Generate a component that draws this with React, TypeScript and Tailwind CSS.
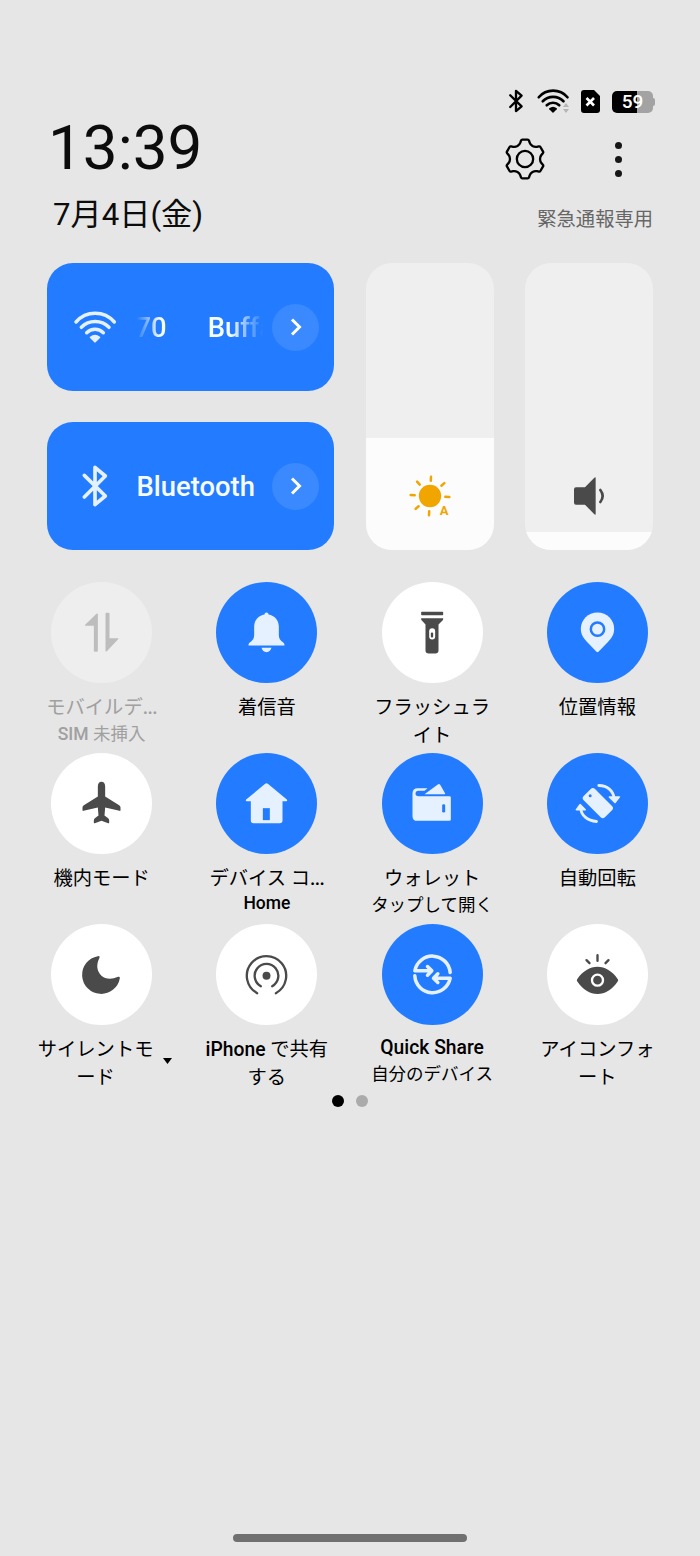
import React from 'react';
import clsx from 'clsx';

type TileState = 'on' | 'off' | 'disabled';

interface Tile {
  id: string;
  icon: React.ReactNode;
  state: TileState;
  lines: string[];
  subtitle?: string;
  hasMenu?: boolean;
}

interface IconProps {
  children: React.ReactNode;
  className?: string;
}

function Icon({ children, className = 'w-12 h-12' }: IconProps) {
  return (
    <svg viewBox="0 0 144 144" className={`shrink-0 ${className}`} fill="currentColor">
      {children}
    </svg>
  );
}

// Odd size so that it centers on whole pixels in the 101px circle
function TileIcon({ children }: IconProps) {
  return (
    <svg viewBox="-1.5 -1.5 147 147" className="shrink-0 w-[49px] h-[49px]" fill="currentColor">
      {children}
    </svg>
  );
}

function Strokes({ children, width }: { children: React.ReactNode; width: number }) {
  return (
    <g fill="none" stroke="currentColor" strokeWidth={width} strokeLinecap="round" strokeLinejoin="round">
      {children}
    </g>
  );
}

function WifiIcon({ className }: { className?: string }) {
  return (
    <Icon className={className}>
      <Strokes width={10.5}>
        <path d="M15 57A76 76 0 0 1 130 57" />
        <path d="M31 73A58 58 0 0 1 114 73" />
        <path d="M47 89A36 36 0 0 1 97 89" />
      </Strokes>
      <path d="M57 105q-2-2 0-4 15-12 30 0 2 2 0 4L74 118q-2 2-4 0z" />
    </Icon>
  );
}

function BluetoothIcon({ className, width = 11 }: { className?: string; width?: number }) {
  return (
    <Icon className={className}>
      <Strokes width={width}>
        <path d="M40 40L103 102 72 128V16L103 42 40 105" />
      </Strokes>
    </Icon>
  );
}

// Six teeth, one every 60 degrees
function gearPath() {
  const parts: string[] = [];
  for (let i = 0; i < 6; i++) {
    const a = (i * Math.PI) / 3;
    const p = (x: number, y: number) =>
      `${(72 + x * Math.cos(a) - y * Math.sin(a)).toFixed(1)} ${(72 + x * Math.sin(a) + y * Math.cos(a)).toFixed(1)}`;
    parts.push(
      `${i === 0 ? 'M' : 'L'}${p(-14, -49)}L${p(-12, -55)}Q${p(-11, -58)} ${p(-8, -58)}L${p(8, -58)}Q${p(11, -58)} ${p(12, -55)}L${p(14, -49)}Q${p(16, -43)} ${p(22.5, -39)}Q${p(29, -35.5)} ${p(35.4, -36.6)}`
    );
  }
  return parts.join('') + 'Z';
}

function GearIcon() {
  return (
    <Icon>
      <Strokes width={7}>
        <path d={gearPath()} />
        <circle cx="72" cy="72" r="24.500" />
      </Strokes>
    </Icon>
  );
}

const tiles: Tile[] = [
  {
    id: 'mobile-data',
    state: 'disabled',
    lines: ['モバイルデ...'],
    subtitle: 'SIM 未挿入',
    icon: (
      <TileIcon>
        <path d="M57 16q4-3 4 1V127q0 3-3 3H53q-4 0-4-3V52H24q-4 0-1-3zM87 13h5q4 0 4 3V89h25q4 0 1 3L88 128q-4 3-4-1V16q0-3 3-3z" />
      </TileIcon>
    ),
  },
  {
    id: 'ringtone',
    state: 'on',
    lines: ['着信音'],
    icon: (
      <TileIcon>
        <path d="M72 12c4 0 6 3 6 6 18 3 31 17 31 36v26c0 10 5 16 13 22 3 2 4 5 4 9H18c0-4 1-7 4-9 8-6 13-12 13-22V54c0-19 13-33 31-36 0-3 2-6 6-6zM57 118h30c-2 8-8 13-15 13s-13-5-15-13z" />
      </TileIcon>
    ),
  },
  {
    id: 'flashlight',
    state: 'off',
    lines: ['フラッシュラ', 'イト'],
    icon: (
      <TileIcon>
        <rect x="38" y="10" width="66" height="10" rx="2" />
        <path d="M38 29h66v3q0 2-2 4L90 48v78q0 9-10 9H61q-10 0-10-9V48L40 36q-2-2-2-4z" />
        <rect x="62" y="59" width="18" height="34" rx="9" className="fill-white" />
        <rect x="67" y="72" width="7" height="15" rx="3" />
      </TileIcon>
    ),
  },
  {
    id: 'location',
    state: 'on',
    lines: ['位置情報'],
    icon: (
      <TileIcon>
        <path d="M72 12C100 12 122 34 122 61c0 17-8 28-18 39L75 130q-3 2-6 0L40 100C30 89 22 78 22 61 22 34 44 12 72 12z" />
        <circle cx="72" cy="62" r="20" fill="none" strokeWidth="7.500" className="stroke-[#237cff]" />
      </TileIcon>
    ),
  },
  {
    id: 'airplane',
    state: 'off',
    lines: ['機内モード'],
    icon: (
      <TileIcon>
        <path d="M72 7c-7 0-11 6-11 14v30L19 77q-4 3-4 7v8q0 3 3 2l43-10 2 24-11 8q-3 3-3 6v7q0 3 3 2l20-7 20 7q3 1 3-2v-7q0-3-3-6l-11-8 2-24 43 10q3 1 3-2v-8q0-4-4-7L83 51V21c0-8-4-14-11-14z" />
      </TileIcon>
    ),
  },
  {
    id: 'device-control',
    state: 'on',
    lines: ['デバイス コ...'],
    subtitle: 'Home',
    icon: (
      <TileIcon>
        <path d="M68 13q4-4 8 0l57 47q3 5-2 5H120V123q0 8-8 8H33q-8 0-8-8V65H13q-5 0-2-5z" />
        <path d="M61 86h21v36H61z" className="fill-[#237cff]" />
      </TileIcon>
    ),
  },
  {
    id: 'wallet',
    state: 'on',
    lines: ['ウォレット'],
    subtitle: 'タップして開く',
    icon: (
      <TileIcon>
        <path d="M28 26H57L48 34H30q-9 1-9 8 0 8 9 8h93q4 0 4 4v66q0 4-4 4H26q-14 0-14-14V42q0-16 16-16z" />
        <path d="M48 44L88 15q4-3 7 1l15 26q1 2-2 2z" />
        <rect x="101" y="74" width="9" height="25" rx="4" className="fill-[#237cff]" />
      </TileIcon>
    ),
  },
  {
    id: 'auto-rotate',
    state: 'on',
    lines: ['自動回転'],
    icon: (
      <TileIcon>
        <rect x="28" y="47" width="90" height="48" rx="9" transform="rotate(45 73 71)" />
        <circle cx="50" cy="49" r="4.500" className="fill-[#237cff]" />
        <Strokes width={8.5}>
          <path d="M76 18C102 18 119 34 122 56" />
          <path d="M69 126C42 124 24 108 22 88" />
        </Strokes>
        <path d="M107 50h31q4 1 1 4L127 70q-2 3-5 0L106 54q-2-3 1-4zM9 93q-5-1-2-4L17 75q3-4 6 0L37 89q2 4-2 4z" />
      </TileIcon>
    ),
  },
  {
    id: 'silent',
    state: 'off',
    lines: ['サイレントモ', 'ード'],
    hasMenu: true,
    icon: (
      <TileIcon>
        <path d="M61 17A57 57 0 1 0 127 83q1-6-5-4C101 88 84 86 71 75 57 61 56 41 66 22q2-7-5-5z" />
      </TileIcon>
    ),
  },
  {
    id: 'iphone-share',
    state: 'off',
    lines: ['iPhone で共有', 'する'],
    icon: (
      <TileIcon>
        <circle cx="72" cy="76" r="12" />
        <Strokes width={7}>
          <path d="M55 107A35.500 35.500 0 1 1 89 107" />
          <path d="M44 128A59 59 0 1 1 100 128" />
        </Strokes>
      </TileIcon>
    ),
  },
  {
    id: 'quick-share',
    state: 'on',
    lines: ['Quick Share'],
    subtitle: '自分のデバイス',
    icon: (
      <TileIcon>
        <Strokes width={10.5}>
          <path d="M125 66A53.500 53.500 0 0 0 19 61H69M57 48L70 61 57 74" />
          <path d="M19 76A53.500 53.500 0 0 0 125 83H76M88 70L75 83 88 96" />
        </Strokes>
      </TileIcon>
    ),
  },
  {
    id: 'eye-comfort',
    state: 'off',
    lines: ['アイコンフォ', 'ート'],
    icon: (
      <TileIcon>
        <path d="M11 86C44 36 100 36 133 86q2 3 0 6C100 143 44 143 11 92q-2-3 0-6z" />
        <circle cx="72" cy="89" r="16.500" fill="none" strokeWidth="7" className="stroke-white" />
        <Strokes width={7}>
          <path d="M72 14V31M39 29L48 38M105 29L96 38" />
        </Strokes>
      </TileIcon>
    ),
  },
];

function StatusBar() {
  return (
    <div className="flex items-center h-6 pr-[45px] justify-end text-black">
      <BluetoothIcon className="w-[26px] h-[26px]" width={13} />
      <div className="relative ml-1.5 mr-2.5 h-9">
        <WifiIcon className="w-9 h-9" />
        <svg viewBox="0 0 6 10" className="absolute left-[28px] top-[20px] w-1.5 h-2.5 fill-[#b5b5b5]">
          <path d="M0 4L3 0 6 4zM0 6H6L3 10z" />
        </svg>
      </div>
      <svg viewBox="0 0 19 23" className="w-[19px] h-[23px]">
        <path d="M3 0H13L19 6V20q0 3-3 3H3q-3 0-3-3V3Q0 0 3 0z" />
        <path d="M5.500 8L13 15.500M13 8L5.500 15.500" className="stroke-white" strokeWidth="2.600" />
      </svg>
      <div className="ml-3 mt-px flex items-center">
        <div className="flex w-[41px] h-[22px] rounded-[5px] items-center justify-center bg-[linear-gradient(to_right,#000_61%,#a3a3a3_61%)] text-[19px] font-medium text-white leading-none">
          59
        </div>
        <div className="w-0.5 h-2 rounded-r-sm bg-[#a3a3a3]" />
      </div>
    </div>
  );
}

function Header() {
  return (
    <div className="flex justify-between h-[125px] pl-12 pr-[46px] text-[#0c0c0c]">
      <div>
        <div className="text-[62px] leading-[72px] -mt-px">13:39</div>
        <div className="text-[31.200px] leading-10 pl-[5px] mt-[11px]">7月4日(金)</div>
      </div>
      <div className="flex flex-col items-end">
        <div className="flex items-center h-12 mt-[22px] pr-8 gap-[66px] text-black">
          <GearIcon />
          <div className="flex flex-col gap-[7px]">
            <span className="w-[7px] h-[7px] rounded-full bg-[#171717]" />
            <span className="w-[7px] h-[7px] rounded-full bg-[#171717]" />
            <span className="w-[7px] h-[7px] rounded-full bg-[#171717]" />
          </div>
        </div>
        <div className="text-[19.300px] leading-7 mt-[23px] pr-px text-[#666]">緊急通報専用</div>
      </div>
    </div>
  );
}

function ConnectionCard({ icon, children }: { icon: React.ReactNode; children: React.ReactNode }) {
  return (
    <div className="flex items-center h-32 w-[287.500px] rounded-[26px] bg-[#237cff] pl-6 pr-[15px] text-[#e4f1ff]">
      {icon}
      <div className="ml-[18px] pt-px flex-1 min-w-0 text-[27.400px] leading-8 font-medium text-[#f6fbff] whitespace-nowrap">
        {children}
      </div>
      <div className="flex items-center justify-center w-[47px] h-[47px] rounded-full bg-[#3a89ff] text-white shrink-0">
        <svg viewBox="0 0 12 18" className="w-3 h-[18px]" fill="none" stroke="currentColor" strokeWidth="3">
          <path d="M2 1.500L9.500 9 2 16.500" />
        </svg>
      </div>
    </div>
  );
}

function Slider({ level, children }: { level: number; children: React.ReactNode }) {
  return (
    <div className="relative flex flex-col justify-end w-32 h-[287px] rounded-[26px] overflow-hidden bg-[#efefef]">
      <div className="bg-[#fcfcfc]" style={{ height: level }} />
      <div className="absolute bottom-[30px] left-10">{children}</div>
    </div>
  );
}

function BrightnessIcon() {
  return (
    <Icon className="w-12 h-12 text-[#f0a500]">
      <circle cx="72" cy="72" r="33.500" />
      <Strokes width={7.5}>
        {[0, 45, 90, 180, 225, 270, 315].map((deg) => (
          <path key={deg} d="M72 26V14" transform={`rotate(${deg + 3} 72 72)`} />
        ))}
      </Strokes>
      <text x="101" y="129" fontSize="39" fontWeight="700" fontFamily="Roboto, sans-serif">
        A
      </text>
    </Icon>
  );
}

function VolumeIcon() {
  return (
    <Icon className="w-12 h-12 text-[#4a4a4a]">
      <path d="M33 46H60L88 17q4-3 4 1V126q0 4-4 1L60 98H33q-6 0-6-6V52q0-6 6-6z" />
      <Strokes width={8}>
        <path d="M106 54Q120 72 106 90" />
      </Strokes>
    </Icon>
  );
}

// Latin runs are set in medium, kana and kanji stay regular
function MixedText({ text }: { text: string }) {
  return (
    <>
      {text.split(/([A-Za-z ]*[A-Za-z]|\.{3})/).map((part, i) =>
        i % 2 === 1 ? (
          <span key={i} className={clsx('font-medium', part === '...' && 'tracking-[-0.600px]')}>
            {part}
          </span>
        ) : (
          part
        )
      )}
    </>
  );
}

function QuickTile({ tile }: { tile: Tile }) {
  return (
    <div className="flex flex-col items-center h-[171px]">
      <div
        className={clsx(
          'flex items-center justify-center w-[101px] h-[101px] rounded-full shrink-0',
          tile.state === 'on' && 'bg-[#237cff] text-[#e6f1ff]',
          tile.state === 'off' && 'bg-white text-[#4a4a4a]',
          tile.state === 'disabled' && 'bg-[#eee] text-[#bdbdbd]'
        )}
      >
        {tile.icon}
      </div>
      <div
        className={clsx(
          'flex items-center gap-[10px] whitespace-nowrap text-center',
          tile.id === 'quick-share' ? 'mt-[9px]' : 'mt-[11px]',
          tile.state === 'disabled' ? 'text-[#a0a0a0]' : 'text-black',
          tile.hasMenu && 'pl-[7px]'
        )}
      >
        <div>
          {tile.lines.map((line) => (
            <div key={line} className="text-[19.300px] leading-7">
              <MixedText text={line} />
            </div>
          ))}
          {tile.subtitle && (
            <div className={clsx('text-[17.500px] leading-6', tile.id === 'device-control' && '-mt-0.5')}>
              <MixedText text={tile.subtitle} />
            </div>
          )}
        </div>
        {tile.hasMenu && (
          <svg viewBox="0 0 9 6" className="w-[9px] h-1.5 mb-[7px]">
            <path d="M0 0H9L4.500 6z" />
          </svg>
        )}
      </div>
    </div>
  );
}

export default function App() {
  return (
    <div className="flex flex-col w-[700px] h-[1556px] bg-[#e6e6e6] pt-[89px] font-['Roboto','Noto_Sans_CJK_JP',sans-serif] overflow-hidden">
      <StatusBar />
      <Header />

      <div className="flex mt-[25px] pl-[46.500px] gap-[31.500px]">
        <div className="flex flex-col gap-[31px]">
          <ConnectionCard icon={<WifiIcon />}>
            <div className="flex gap-[41px] overflow-hidden w-[126px] mask-[linear-gradient(to_right,transparent,#000_18%,#000_74%,transparent)]">
              <span className="-ml-px">70</span>
              <span>Buffa</span>
            </div>
          </ConnectionCard>
          <ConnectionCard icon={<BluetoothIcon />}>Bluetooth</ConnectionCard>
        </div>
        <Slider level={112}>
          <BrightnessIcon />
        </Slider>
        <Slider level={18}>
          <VolumeIcon />
        </Slider>
      </div>

      <div className="grid grid-cols-4 w-[661px] ml-[19px] mt-8">
        {tiles.map((tile) => (
          <QuickTile key={tile.id} tile={tile} />
        ))}
      </div>

      <div className="flex justify-center gap-3">
        <span className="w-3 h-3 rounded-full bg-black" />
        <span className="w-3 h-3 rounded-full bg-[#ababab]" />
      </div>

      <div className="mt-auto mb-3.5 mx-auto w-[234px] h-2 rounded-full bg-[#707070]" />
    </div>
  );
}
